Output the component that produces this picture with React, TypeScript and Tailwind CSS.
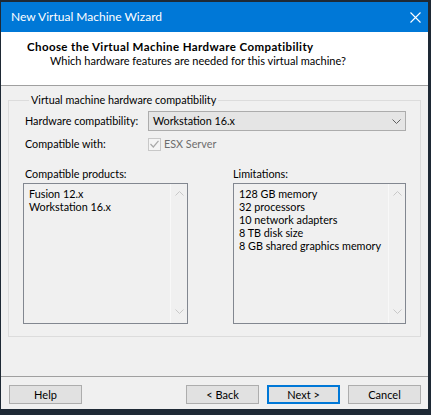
import React from "react";

const Chevron = ({ up, color }: { up?: boolean; color: string }) => (
  <svg width="9" height="5" viewBox="0 0 9 5" fill="none">
    <path
      d={up ? "M0.5 4.5 L4.5 0.5 L8.5 4.5" : "M0.5 0.5 L4.5 4.5 L8.5 0.5"}
      stroke={color}
      strokeWidth="1"
    />
  </svg>
);

const ListBox = ({ items, className }: { items: string[]; className: string }) => (
  <div className={`flex h-[141px] border border-[#828790] bg-[#f0f0f0] ${className}`}>
    <div className="flex-1 pl-[5px] pt-[3px] leading-[13px]">
      {items.map((item) => (
        <div key={item}>{item}</div>
      ))}
    </div>
    {/* disabled scrollbar */}
    <div className="flex w-[17px] flex-col items-center justify-between border-l border-[#f8f8f8] pt-[7px] pb-[9px]">
      <Chevron up color="#c8c8c8" />
      <Chevron color="#c8c8c8" />
    </div>
  </div>
);

const Button = ({ label, primary }: { label: string; primary?: boolean }) => (
  <button
    className={`h-[19px] w-[73px] bg-[#e1e1e1] text-[11px] leading-none text-black ${
      primary ? "border-2 border-[#0078d7]" : "border border-[#adadad]"
    }`}
  >
    {label}
  </button>
);

export default function App() {
  return (
    <div className="h-[415px] w-[431px] bg-[#1e2935] pl-[1px] pt-[2px] font-['Lato',sans-serif] text-[10.8px] whitespace-nowrap text-black">
      <div className="flex h-[407px] w-[427px] flex-col">
        {/* title bar */}
        <div className="flex h-[30px] items-center justify-between bg-[#0078d7] pl-[10px] pr-[7px] text-white">
          <span className="text-[12px]">New Virtual Machine Wizard</span>
          <svg width="11" height="11" viewBox="0 0 11 11">
            <path d="M0.5 0.5 L10.5 10.5 M10.5 0.5 L0.5 10.5" stroke="#ffffff" strokeWidth="1.1" />
          </svg>
        </div>

        {/* header */}
        <div className="h-[54px] border-b border-[#a0a0a0] bg-white pl-[26px] pt-[8px]">
          <div className="text-[11.5px] font-bold leading-[14px] tracking-[0.4px]">
            Choose the Virtual Machine Hardware Compatibility
          </div>
          <div className="pl-[23px] text-[11px] leading-[14px]">
            Which hardware features are needed for this virtual machine?
          </div>
        </div>

        {/* body */}
        <div className="flex-1 bg-[#f0f0f0] pt-[6px]">
          <fieldset className="mx-[7px] border border-[#dcdcdc] px-[14px] pb-[12px]">
            <legend className="ml-[6px] px-[2px] leading-[16px]">Virtual machine hardware compatibility</legend>

            <div className="mt-[3px] flex items-center">
              <span className="w-[125px] pl-[2px]">Hardware compatibility:</span>
              <div className="flex h-[20px] w-[258px] items-center justify-between border border-[#acacac] bg-[#e5e5e5] pl-[4px] pr-[4px]">
                <span>Workstation 16.x</span>
                <Chevron color="#606060" />
              </div>
            </div>

            <div className="mt-[3px] flex h-[20px] items-center">
              <span className="w-[125px] pl-[2px]">Compatible with:</span>
              <div className="flex items-center gap-[3px] text-[#6d6d6d]">
                <div className="flex h-[13px] w-[13px] items-center justify-center border border-[#c8c8c8] bg-[#f4f4f4]">
                  <svg width="9" height="8" viewBox="0 0 9 8" fill="none">
                    <path d="M0.5 4 L3.3 7 L8.5 0.8" stroke="#a8a8a8" strokeWidth="1.2" />
                  </svg>
                </div>
                <span>ESX Server</span>
              </div>
            </div>

            <div className="mt-[12px] flex gap-[45px]">
              <div>
                <div className="pl-[2px] leading-[16px]">Compatible products:</div>
                <ListBox className="mt-[1px] w-[165px]" items={["Fusion 12.x", "Workstation 16.x"]} />
              </div>
              <div>
                <div className="leading-[16px]">Limitations:</div>
                <ListBox
                  className="mt-[1px] w-[173px]"
                  items={[
                    "128 GB memory",
                    "32 processors",
                    "10 network adapters",
                    "8 TB disk size",
                    "8 GB shared graphics memory",
                  ]}
                />
              </div>
            </div>
          </fieldset>
        </div>

        {/* buttons */}
        <div className="flex h-[33px] border-t border-[#a0a0a0] bg-[#f0f0f0] pl-[8px] pt-[8px]">
          <Button label="Help" />
          <div className="ml-auto mr-[7px] flex gap-[8px]">
            <Button label="< Back" />
            <Button label="Next >" primary />
            <Button label="Cancel" />
          </div>
        </div>
      </div>
    </div>
  );
}
